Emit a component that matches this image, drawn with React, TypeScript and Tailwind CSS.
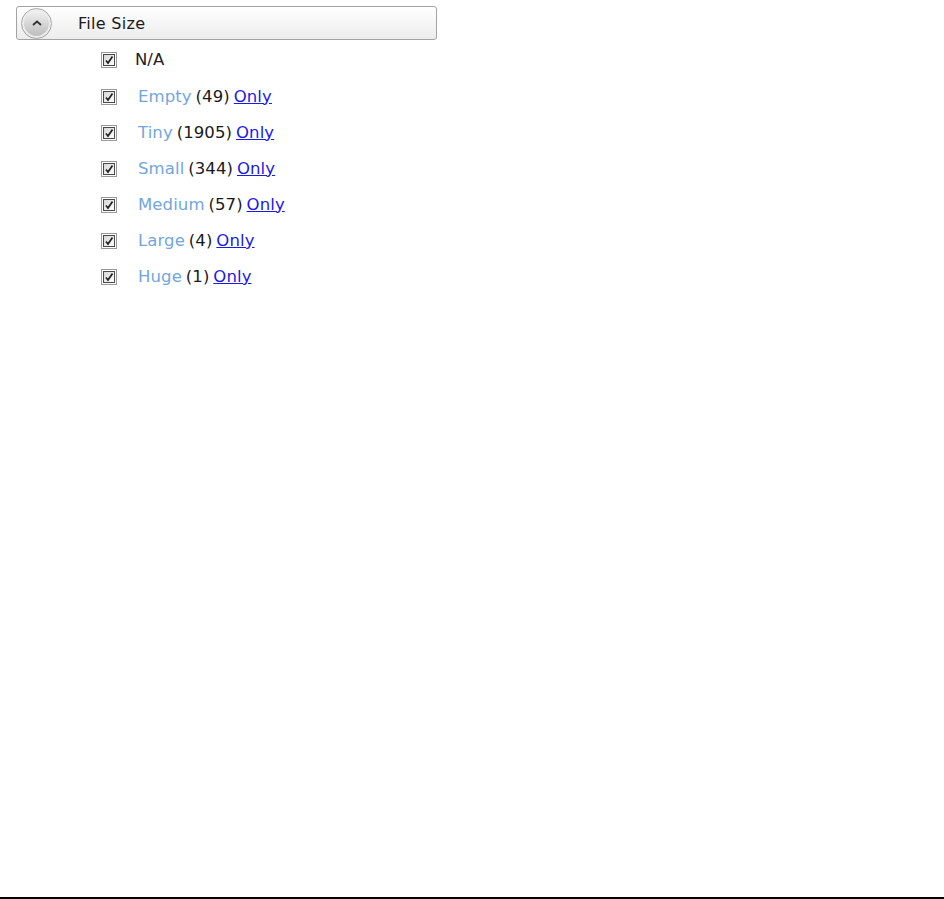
import React from "react";

const items = [
  { label: "Empty", count: 49 },
  { label: "Tiny", count: 1905 },
  { label: "Small", count: 344 },
  { label: "Medium", count: 57 },
  { label: "Large", count: 4 },
  { label: "Huge", count: 1 },
];

const CheckBox: React.FC = () => (
  <span className="flex h-[16px] w-[16px] shrink-0 items-center justify-center border border-[#9a9a9a] bg-white p-px">
    <span className="flex h-full w-full items-center justify-center border border-[#4a4a4a] bg-gradient-to-br from-[#d6d6d6] to-white">
      <svg width="10" height="10" viewBox="0 0 10 10">
        <path d="M2 5.5 L4 8 L8.5 1.5" fill="none" stroke="#222" strokeWidth="1.7" />
      </svg>
    </span>
  </span>
);

export default function App() {
  return (
    <div
      className="relative h-[899px] w-full bg-white text-[#222]"
      style={{ fontFamily: "'DejaVu Sans', Verdana, sans-serif" }}
    >
      <div className="pl-4 pt-[6px]">
        <div className="flex h-[34px] w-[421px] items-center rounded-[3px] border border-[#a3a3a3] bg-gradient-to-b from-white to-[#ececec] pl-1">
          <span className="flex h-[31px] w-[31px] items-center justify-center rounded-full border border-[#a8a8a8] bg-gradient-to-b from-[#f5f5f5] to-[#b9b9b9] shadow-[inset_0_0_0_2px_#ededed]">
            <svg width="12" height="8" viewBox="0 0 12 8">
              <path d="M2 6 L6 2.5 L10 6" fill="none" stroke="#333" strokeWidth="1.8" />
            </svg>
          </span>
          <span className="ml-[26px] pt-px text-[16px] tracking-[0.3px] text-[#1a1a1a]">File Size</span>
        </div>
      </div>

      <div className="flex flex-col gap-[20px] pl-[101px] pt-[12px]">
        <div className="flex h-[16px] items-center">
          <CheckBox />
          <span className="ml-[18px] text-[16.5px]">N/A</span>
        </div>
        <div className="flex flex-col gap-[20px] pt-px">
          {items.map((it) => (
            <div key={it.label} className="flex h-[16px] items-center">
              <CheckBox />
              <span className="ml-[21px] text-[16.5px] tracking-[0.1px] [word-spacing:-1.5px] whitespace-nowrap text-[#1a1a1a]">
                <span className="text-[#72a6dd]">{it.label}</span> ({it.count}){" "}
                <a href="#" className="text-[#1a1ae6] underline">
                  Only
                </a>
              </span>
            </div>
          ))}
        </div>
      </div>

      <div className="absolute bottom-0 left-0 h-[2px] w-full bg-black" />
    </div>
  );
}
